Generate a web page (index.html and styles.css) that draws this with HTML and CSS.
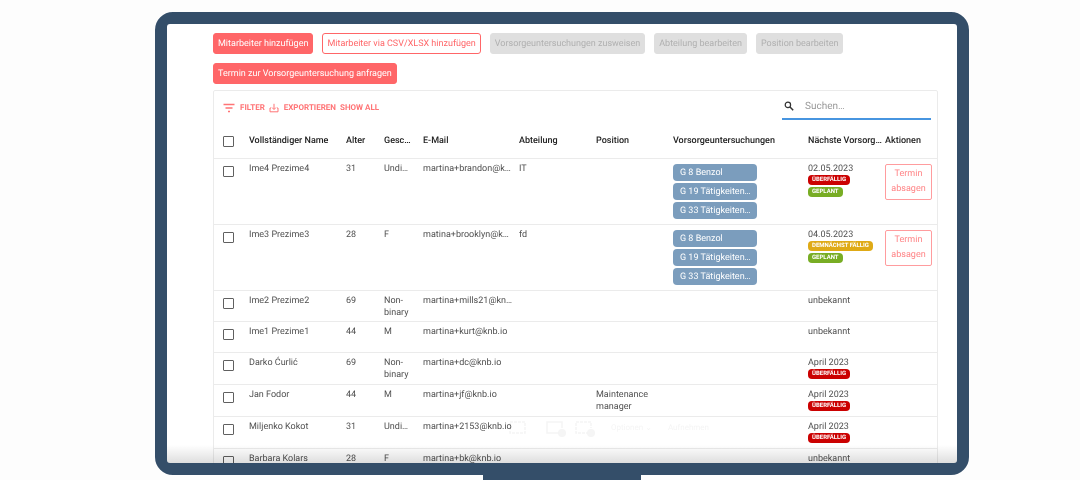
FILE: index.html
```html
<!DOCTYPE html>
<html lang="de">
<head>
<meta charset="utf-8">
<title>Mitarbeiter</title>
<link rel="stylesheet" href="styles.css">
</head>
<body>
<div class="monitor">
  <main class="screen">
    <div class="actions">
      <button class="btn primary">Mitarbeiter hinzufügen</button>
      <button class="btn outline">Mitarbeiter via CSV/XLSX hinzufügen</button>
      <button class="btn" disabled>Vorsorgeuntersuchungen zusweisen</button>
      <button class="btn" disabled>Abteilung bearbeiten</button>
      <button class="btn" disabled>Position bearbeiten</button>
      <button class="btn primary">Termin zur Vorsorgeuntersuchung anfragen</button>
    </div>
    <section class="card">
      <div class="toolbar">
        <div class="tools">
          <button class="tool"><svg class="icon" viewBox="0 0 12 12"><path d="M.5 2.500h11M2.500 6h7M5 9.500h2" fill="none" stroke="currentColor" stroke-width="1.400"/></svg>FILTER</button>
          <button class="tool"><svg class="icon export" viewBox="0 0 10 10"><path d="M5 .8v5.400M3 4.500l2 2 2-2M2 5H1v3.800h8V5H8" fill="none" stroke="currentColor" stroke-width="1" stroke-linejoin="round"/></svg>EXPORTIEREN</button>
          <button class="tool">SHOW ALL</button>
        </div>
        <label class="search">
          <svg class="icon lens" viewBox="0 0 10 10"><circle cx="3.900" cy="3.900" r="2.700" fill="none" stroke="currentColor" stroke-width="1.200"/><path d="M6 6l3.200 3.200" stroke="currentColor" stroke-width="1.500"/></svg>
          <input type="text" placeholder="Suchen…" aria-label="Suchen">
        </label>
      </div>
      <table>
        <colgroup><col class="c-check"><col class="c-name"><col class="c-age"><col class="c-sex"><col class="c-mail"><col class="c-dept"><col class="c-pos"><col class="c-exam"><col class="c-next"><col class="c-act"></colgroup>
        <thead>
          <tr><th><input type="checkbox" aria-label="Alle auswählen"></th><th>Vollständiger Name</th><th>Alter</th><th>Gesc…</th><th>E-Mail</th><th>Abteilung</th><th>Position</th><th>Vorsorgeuntersuchungen</th><th>Nächste Vorsorg…</th><th>Aktionen</th></tr>
        </thead>
        <tbody>
          <tr class="tall"><td><input type="checkbox" aria-label="Ime4 Prezime4"></td><td>Ime4 Prezime4</td><td>31</td><td>Undi…</td><td>martina+brandon@k…</td><td>IT</td><td></td>
            <td><div class="exams"><span class="exam">G 8 Benzol</span><span class="exam">G 19 Tätigkeiten…</span><span class="exam">G 33 Tätigkeiten…</span></div></td>
            <td>02.05.2023<div class="tags"><span class="tag red">ÜBERFÄLLIG</span><span class="tag green">GEPLANT</span></div></td>
            <td><button class="cancel">Termin absagen</button></td></tr>
          <tr class="tall"><td><input type="checkbox" aria-label="Ime3 Prezime3"></td><td>Ime3 Prezime3</td><td>28</td><td>F</td><td>matina+brooklyn@k…</td><td>fd</td><td></td>
            <td><div class="exams"><span class="exam">G 8 Benzol</span><span class="exam">G 19 Tätigkeiten…</span><span class="exam">G 33 Tätigkeiten…</span></div></td>
            <td>04.05.2023<div class="tags"><span class="tag yellow">DEMNÄCHST FÄLLIG</span><span class="tag green">GEPLANT</span></div></td>
            <td><button class="cancel">Termin absagen</button></td></tr>
          <tr class="plain"><td><input type="checkbox" aria-label="Ime2 Prezime2"></td><td>Ime2 Prezime2</td><td>69</td><td>Non-<br>binary</td><td>martina+mills21@kn…</td><td></td><td></td><td></td><td>unbekannt</td><td></td></tr>
          <tr class="plain"><td><input type="checkbox" aria-label="Ime1 Prezime1"></td><td>Ime1 Prezime1</td><td>44</td><td>M</td><td>martina+kurt@knb.io</td><td></td><td></td><td></td><td>unbekannt</td><td></td></tr>
          <tr><td><input type="checkbox" aria-label="Darko Ćurlić"></td><td>Darko Ćurlić</td><td>69</td><td>Non-<br>binary</td><td>martina+dc@knb.io</td><td></td><td></td><td></td><td>April 2023<div class="tags"><span class="tag red">ÜBERFÄLLIG</span></div></td><td></td></tr>
          <tr><td><input type="checkbox" aria-label="Jan Fodor"></td><td>Jan Fodor</td><td>44</td><td>M</td><td>martina+jf@knb.io</td><td></td><td>Maintenance<br>manager</td><td></td><td>April 2023<div class="tags"><span class="tag red">ÜBERFÄLLIG</span></div></td><td></td></tr>
          <tr><td><input type="checkbox" aria-label="Miljenko Kokot"></td><td>Miljenko Kokot</td><td>31</td><td>Undi…</td><td>martina+2153@knb.io</td><td></td><td></td><td></td><td>April 2023<div class="tags"><span class="tag red">ÜBERFÄLLIG</span></div></td><td></td></tr>
          <tr><td><input type="checkbox" aria-label="Barbara Kolars"></td><td>Barbara Kolars</td><td>28</td><td>F</td><td>martina+bk@knb.io</td><td></td><td></td><td></td><td>unbekannt</td><td></td></tr>
        </tbody>
      </table>
    </section>
    <div class="recorder">
      <svg class="rec-icons" viewBox="0 0 95 20"><g fill="none" stroke="currentColor" stroke-width="1.500"><rect x="10" y="4" width="15" height="11" stroke-dasharray="3 1"/><path d="M60 15H47V4h15v6"/><path d="M89 15H76V4h15v6" stroke-dasharray="3 1"/></g><g fill="currentColor"><circle cx="62" cy="15" r="4"/><circle cx="91" cy="15" r="4"/></g></svg>
      <span>Optionen ⌄</span><span>Aufnehmen</span>
    </div>
    <div class="shade"></div>
  </main>
</div>
<div class="stand"></div>
</body>
</html>
```

FILE: styles.css
```css
* { box-sizing: border-box; }
body {
  margin: 0;
  height: 100vh;
  min-height: 240px;
  padding: 12px 111px 0 155px;
  display: flex;
  flex-direction: column;
  background: #fdfdfd;
  color: #505050;
  font: 9px/12px Roboto, sans-serif;
  text-rendering: geometricPrecision;
}
button, input { font: inherit; color: inherit; margin: 0; text-rendering: inherit; }
.monitor {
  flex: 1;
  min-height: 0;
  display: flex;
  border: 12px solid #344e69;
  border-radius: 18px;
  background: #344e69;
}
.screen {
  position: relative;
  flex: 1;
  overflow: hidden;
  padding: 9px 19px 0 46px;
  border-radius: 3px;
  background: #fff;
}
.stand { width: 158px; height: 5px; margin-left: 328px; background: #344e69; }

.actions { display: flex; flex-wrap: wrap; gap: 9px; padding-right: 40px; }
.btn {
  height: 21px;
  padding: 1px 4px 0;
  border: 1px solid #ff6668;
  border-radius: 3px;
  line-height: 18px;
  white-space: nowrap;
}
.primary { background: #ff6668; color: #fff; }
.outline { background: #fff; color: #ff6668; }
.btn:disabled { background: #dfdfdf; border-color: #dfdfdf; color: #b0b0b0; }

.card { margin-top: 6px; border: 1px solid #ebebeb; border-radius: 2px; }
.toolbar {
  display: flex;
  justify-content: space-between;
  align-items: flex-start;
  height: 33px;
  padding: 3px 6px 0 9px;
}
.tools { display: flex; gap: 4px; padding-top: 8px; }
.tool {
  display: flex;
  align-items: center;
  gap: 5px;
  padding: 0;
  border: 0;
  background: none;
  color: #ff7476;
  font-size: 8px;
  font-weight: 700;
  line-height: 12px;
}
.icon { width: 12px; height: 12px; flex: none; }
.export { width: 10px; height: 10px; }
.lens { width: 10px; height: 10px; color: #333; }
.search {
  display: flex;
  align-items: center;
  gap: 11px;
  width: 149px;
  height: 26px;
  padding-left: 2px;
  border-bottom: 2px solid #4795e0;
}
.search input { flex: 1; min-width: 0; padding: 2px 0 0; border: 0; outline: 0; background: none; font-size: 10px; }
.search input::placeholder { color: #999; opacity: 1; }

table { width: 100%; table-layout: fixed; border-collapse: collapse; }
.c-check { width: 30px; }
.c-name { width: 97px; }
.c-age { width: 38px; }
.c-sex { width: 39px; }
.c-mail { width: 96px; }
.c-dept, .c-pos, .c-next { width: 77px; }
.c-exam { width: 135px; }
.c-act { width: 57px; }
th {
  height: 34px;
  padding: 1px 0 0 5px;
  color: #222;
  font-weight: 500;
  text-align: left;
  white-space: nowrap;
}
td {
  height: 32px;
  padding: 4px 5px 0;
  border-top: 1px solid #ebebeb;
  vertical-align: top;
  white-space: nowrap;
}
.tall td { height: 66px; }
.plain td { height: 31px; }
th:first-child, td:first-child { padding-left: 9px; }
td:first-child { padding-top: 7px; }
input[type="checkbox"] {
  display: block;
  appearance: none;
  width: 11px;
  height: 11px;
  border: 1px solid #606060;
  border-radius: 1px;
  background: #fff;
}
.exams { display: flex; flex-direction: column; gap: 2px; width: 84px; padding-top: 1px; }
.exam { height: 17px; padding: 1px 7px 0; border-radius: 4px; background: #7b9dbd; color: #fff; line-height: 16px; }
.tags { display: flex; flex-direction: column; align-items: flex-start; gap: 2px; }
.tag { height: 10px; padding: 0 4px; border-radius: 4px; color: #fff; font-size: 6px; font-weight: 700; line-height: 10px; }
.red { background: #cb0101; }
.green { background: #78ad24; }
.yellow { background: #dfaa16; }
.cancel {
  width: 100%;
  margin-top: 1px;
  padding: 2px 5px;
  border: 1px solid #ff9c9e;
  border-radius: 2px;
  background: #fff;
  color: #ff8486;
  line-height: 15px;
  white-space: normal;
}
.recorder {
  position: absolute;
  left: 333px;
  bottom: 25px;
  display: flex;
  align-items: center;
  gap: 16px;
  color: #f5f5f5;
  font-size: 8px;
  mix-blend-mode: multiply;
  pointer-events: none;
}
.rec-icons { width: 95px; height: 20px; }
.shade {
  position: absolute;
  left: 0;
  right: 0;
  bottom: 0;
  height: 18px;
  background: linear-gradient(rgba(0, 0, 0, 0), rgba(0, 0, 0, .13));
  pointer-events: none;
}
```
